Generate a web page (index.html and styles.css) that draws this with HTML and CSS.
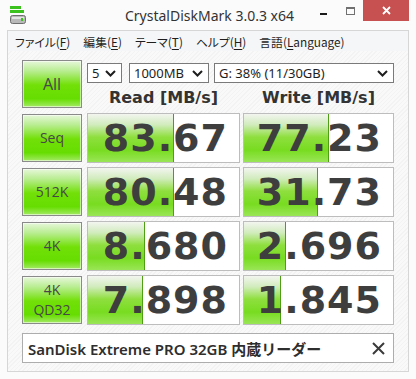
FILE: index.html
```html
<!DOCTYPE html>
<html lang="ja">
<head>
<meta charset="utf-8">
<title>CrystalDiskMark 3.0.3 x64</title>
<link rel="stylesheet" href="styles.css">
</head>
<body>
<div class="window">
  <div class="titlebar">
    <svg class="appicon" width="16" height="18" viewBox="0 0 16 18">
      <rect x="0" y="0" width="11" height="3" fill="#3cc21e"/>
      <rect x="0" y="4" width="14" height="3" fill="#3cc21e"/>
      <rect x="0.5" y="9.5" width="15" height="8" rx="2" fill="#b9b9b9" stroke="#6e6e6e"/>
      <rect x="2" y="11" width="12" height="2" fill="#e4e4e4"/>
      <rect x="11" y="12" width="2" height="3" fill="#3cc21e"/>
    </svg>
    <div class="title">CrystalDiskMark 3.0.3 x64</div>
    <div class="winctrls">
      <span class="wmin"></span>
      <span class="wmax"></span>
      <span class="wclose"><svg width="9" height="9" viewBox="0 0 9 9"><path d="M1 1 L8 8 M8 1 L1 8" stroke="#fff" stroke-width="1.8"/></svg></span>
    </div>
  </div>
  <div class="client">
    <div class="menubar">
      <span class="mi">ファイル(<u>F</u>)</span>
      <span class="mi">編集(<u>E</u>)</span>
      <span class="mi">テーマ(<u>T</u>)</span>
      <span class="mi">ヘルプ(<u>H</u>)</span>
      <span class="mi">言語(<u>L</u>anguage)</span>
    </div>
    <div class="content">
      <div class="grid">
        <div class="btn btn-all">All</div>
        <div class="top">
          <div class="selects">
            <div class="sel sel-count"><span>5</span><svg class="chev" width="11" height="7" viewBox="0 0 11 7"><path d="M1 1 L5.5 5.5 L10 1" fill="none" stroke="#1e1e1e" stroke-width="2"/></svg></div>
            <div class="sel sel-size"><span>1000MB</span><svg class="chev" width="11" height="7" viewBox="0 0 11 7"><path d="M1 1 L5.5 5.5 L10 1" fill="none" stroke="#1e1e1e" stroke-width="2"/></svg></div>
            <div class="sel sel-drive"><span>G: 38% (11/30GB)</span><svg class="chev" width="11" height="7" viewBox="0 0 11 7"><path d="M1 1 L5.5 5.5 L10 1" fill="none" stroke="#1e1e1e" stroke-width="2"/></svg></div>
          </div>
          <div class="heads">
            <div class="head head-read">Read [MB/s]</div>
            <div class="head head-write">Write [MB/s]</div>
          </div>
        </div>

        <div class="btn">Seq</div>
        <div class="val val-read" style="--w:86px"><span>83.67</span></div>
        <div class="val val-write" style="--w:85px"><span>77.23</span></div>

        <div class="btn">512K</div>
        <div class="val val-read" style="--w:86px"><span>80.48</span></div>
        <div class="val val-write" style="--w:74px"><span>31.73</span></div>

        <div class="btn">4K</div>
        <div class="val val-read" style="--w:57px"><span>8.680</span></div>
        <div class="val val-write" style="--w:42px"><span>2.696</span></div>

        <div class="btn btn-two">4K<br>QD32</div>
        <div class="val val-read" style="--w:55px"><span>7.898</span></div>
        <div class="val val-write" style="--w:37px"><span>1.845</span></div>
      </div>
      <div class="comment">
        <span class="ctext">SanDisk Extreme PRO 32GB 内蔵リーダー</span>
        <svg class="cx" width="13" height="13" viewBox="0 0 13 13"><path d="M1 1 L12 12 M12 1 L1 12" stroke="#3a3a3a" stroke-width="2"/></svg>
      </div>
    </div>
  </div>
</div>
</body>
</html>
```
FILE: styles.css
```css
* { box-sizing: border-box; }
html, body { margin: 0; padding: 0; }
body {
  width: 416px;
  height: 379px;
  overflow: hidden;
  background: #fbfbfb;
  font-family: "Noto Sans", "Noto Sans CJK JP", sans-serif;
  color: #2b2b2b;
}
.window {
  width: 416px;
  height: 379px;
  display: flex;
  flex-direction: column;
}
.titlebar {
  height: 30px;
  display: grid;
  grid-template-columns: 1fr auto 1fr;
  padding: 0 7px 0 10px;
}
.appicon { margin-top: 6px; }
.title {
  font-family: "Noto Sans", sans-serif;
  font-size: 14px;
  line-height: 30px;
  color: #333;
  padding-top: 1px;
}
.winctrls {
  justify-self: end;
  display: flex;
  align-items: flex-start;
}
.wmin {
  width: 7px;
  height: 2px;
  background: #1a1a1a;
  margin-top: 13px;
  margin-right: 19px;
}
.wmax {
  width: 9px;
  height: 8px;
  border: 1px solid #707070;
  border-top-width: 2px;
  margin-top: 7px;
  margin-right: 8px;
}
.wclose {
  width: 46px;
  height: 21px;
  background: #c75050;
  display: flex;
  align-items: center;
  justify-content: center;
}
.client {
  margin: 0 7px;
  height: 342px;
  border: 1px solid #d6d6d6;
  display: flex;
  flex-direction: column;
}
.menubar {
  height: 20px;
  background: #f5f6f7;
  display: flex;
  align-items: center;
  gap: 13px;
  padding-left: 7px;
  font-family: "Noto Sans CJK JP", sans-serif;
  font-feature-settings: "palt";
  font-size: 11.8px;
  color: #1e1e1e;
}
.mi u { text-decoration-thickness: 1px; text-underline-offset: 2px; }
.content {
  flex: 1;
  padding: 8px 14px 8px 14px;
  background: repeating-linear-gradient(-45deg, #f9f9f9 0 2px, #f3f3f3 2px 3px);
}
.grid {
  display: grid;
  grid-template-columns: 65px 156px 151px;
  grid-auto-rows: 50px;
  row-gap: 4px;
}
.btn {
  width: 60px;
  height: 48px;
  align-self: center;
  border: 1px solid #8a8a8a;
  box-shadow: inset 0 0 0 1px rgba(255,255,255,0.55);
  background: linear-gradient(to bottom, #e6f7da 0%, #b8ed90 22%, #72e008 52%, #66dd00 82%, #a4ea66 100%);
  display: flex;
  align-items: center;
  justify-content: center;
  text-align: center;
  font-family: "Open Sans", sans-serif;
  font-size: 14px;
  line-height: 20px;
  color: #474747;
}
.btn-all { font-size: 16px; }
.top {
  grid-column: 2 / 4;
  display: flex;
  flex-direction: column;
}
.selects {
  display: flex;
  margin-top: 4px;
  height: 20px;
}
.sel {
  height: 20px;
  border: 1px solid #7a7a7a;
  background: #fff;
  display: flex;
  align-items: center;
  justify-content: space-between;
  padding: 0 5px 0 4px;
  font-family: "Noto Sans", sans-serif;
  font-size: 13px;
  color: #1e1e1e;
}
.sel-count { width: 35px; margin-right: 7px; }
.sel-size { width: 80px; margin-right: 5px; }
.sel-drive { width: 180px; }
.chev { flex: none; }
.heads {
  display: grid;
  grid-template-columns: 156px 151px;
  margin-top: 5px;
}
.head {
  width: 153px;
  text-align: center;
  font-family: "DejaVu Sans", sans-serif;
  font-weight: bold;
  font-size: 16px;
  line-height: 20px;
  color: #333;
}
.head-write { width: 151px; }
.val {
  height: 50px;
  border: 1px solid #bdbdbd;
  background:
    linear-gradient(#4f9f14, #4f9f14) calc(var(--w) - 1px) 0 / 1px 100% no-repeat,
    linear-gradient(to bottom, #f2f5ef 0%, #d2ecbe 22%, #8fdf3f 48%, #78dc20 75%, #9ae656 100%) 0 0 / var(--w) 100% no-repeat,
    #fff;
  display: flex;
  align-items: center;
  justify-content: flex-end;
  padding-right: 11px;
  font-family: "DejaVu Sans", sans-serif;
  font-weight: bold;
  font-size: 38px;
  letter-spacing: 1px;
  color: #3e3e3e;
}
.val-read { width: 153px; }
.val-write { width: 151px; }
.comment {
  margin-top: 8px;
  height: 30px;
  border: 1px solid #adadad;
  background: #fff;
  display: flex;
  align-items: center;
  justify-content: space-between;
  padding: 0 8px 0 5px;
}
.ctext {
  font-family: "Noto Sans", "Noto Sans CJK JP", sans-serif;
  font-weight: 600;
  font-size: 15px;
  color: #2e2e2e;
}
.cx { flex: none; }
```
